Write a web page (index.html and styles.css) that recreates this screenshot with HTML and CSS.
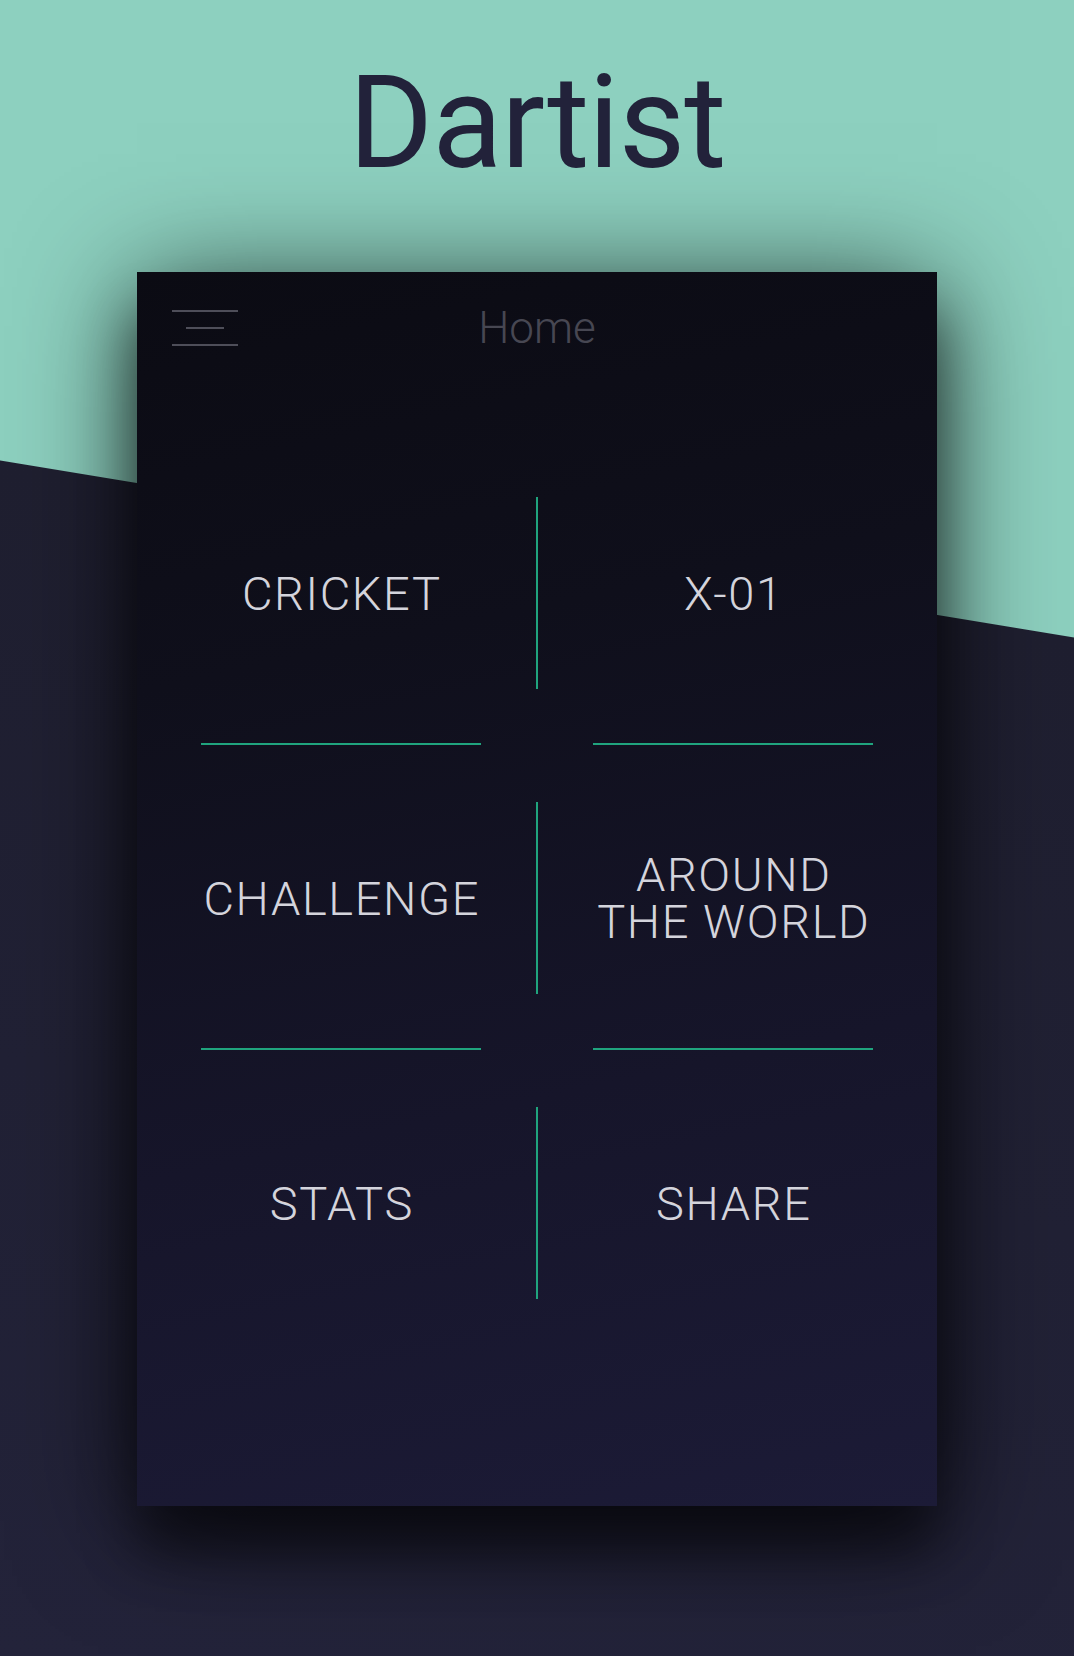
FILE: index.html
```html
<!DOCTYPE html>
<html lang="en">
<head>
<meta charset="utf-8">
<title>Dartist</title>
<link rel="stylesheet" href="styles.css">
</head>
<body>
<div class="page">
  <h1 class="brand">Dartist</h1>
  <main class="card">
    <header class="topbar">
      <div class="burger" aria-label="Menu">
        <span class="bar bar-long"></span>
        <span class="bar bar-short"></span>
        <span class="bar bar-long"></span>
      </div>
      <div class="title">Home</div>
      <div class="spacer"></div>
    </header>
    <section class="menu">
      <div class="item">CRICKET</div>
      <div class="vline"></div>
      <div class="item">X-01</div>

      <div class="hline"></div>
      <div class="gap"></div>
      <div class="hline"></div>

      <div class="item">CHALLENGE</div>
      <div class="vline"></div>
      <div class="item item-stack"><span>AROUND</span><span>THE WORLD</span></div>

      <div class="hline"></div>
      <div class="gap"></div>
      <div class="hline"></div>

      <div class="item">STATS</div>
      <div class="vline"></div>
      <div class="item">SHARE</div>
    </section>
  </main>
</div>
</body>
</html>
```

FILE: styles.css
```css
html, body {
  margin: 0;
  padding: 0;
}

body {
  font-family: Roboto, "Noto Sans", "Liberation Sans", sans-serif;
}

.page {
  width: 1074px;
  height: 1656px;
  overflow: hidden;
  box-sizing: border-box;
  padding-top: 58px;
  background: linear-gradient(189.36deg, #8dd0bf 0, #8dd0bf 628.5px, #1f1f30 629.5px, #23233a 100%);
}

.brand {
  margin: 0;
  text-align: center;
  font-size: 129px;
  line-height: 129px;
  font-weight: 400;
  color: #22223a;
  letter-spacing: -1px;
}

.card {
  width: 800px;
  height: 1234px;
  margin: 85px auto 0;
  box-sizing: border-box;
  padding-top: 38px;
  background: linear-gradient(168deg, #0b0b13 0%, #0f0f1b 30%, #16152a 65%, #1c1b37 100%);
  box-shadow: 0 15px 110px rgba(0, 0, 0, 0.72), 0 45px 50px rgba(0, 0, 0, 0.45);
}

.topbar {
  display: grid;
  grid-template-columns: 1fr auto 1fr;
  align-items: start;
  padding: 0 35px;
  height: 36px;
}

.burger {
  width: 66px;
  height: 36px;
  display: flex;
  flex-direction: column;
  justify-content: space-between;
  align-items: center;
}

.bar {
  display: block;
  height: 2px;
  background: #4e4e59;
}

.bar-long { width: 66px; }
.bar-short { width: 38px; }

.title {
  font-size: 44px;
  line-height: 36px;
  font-weight: 300;
  color: #474752;
}

.menu {
  display: grid;
  grid-template-columns: 280px 112px 280px;
  grid-template-rows: 192px 113px 192px 113px 192px;
  padding: 0 64px;
  margin-top: 151px;
}

.item {
  display: flex;
  flex-direction: column;
  align-items: center;
  justify-content: center;
  text-align: center;
  font-size: 47px;
  line-height: 47px;
  font-weight: 300;
  letter-spacing: 1.6px;
  padding-left: 1.6px;
  color: #d4d4dc;
}

.item-stack span {
  display: block;
  line-height: 47px;
  height: 47px;
}

.vline {
  width: 2px;
  justify-self: center;
  background: #20a47e;
}

.hline {
  height: 2px;
  margin-top: 54px;
  background: #20a47e;
}
```
